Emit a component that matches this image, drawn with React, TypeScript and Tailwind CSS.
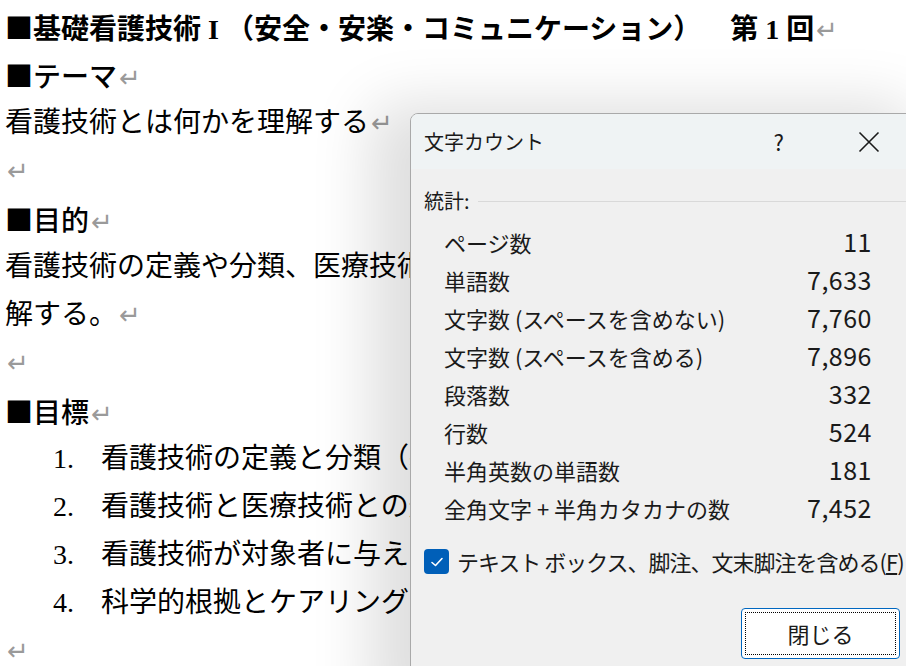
import React from "react";

const docFont = {
  fontFamily: '"Liberation Serif", "Noto Sans CJK JP", serif',
};

const uiFont = {
  fontFamily: '"Noto Sans CJK JP", "Noto Sans", sans-serif',
};

// Gray paragraph mark shown by Word
function Mark() {
  return (
    <span className="ml-[2px] text-[26px] font-normal leading-none text-[#9a9a9a]">↵</span>
  );
}

// Black square bullet, drawn with the CJK font so it is full width
function Square() {
  return (
    <span style={{ fontFamily: '"Noto Sans CJK JP", sans-serif' }}>■</span>
  );
}

const goals = [
  "看護技術の定義と分類（基本技術と応用技術）を説明できる",
  "看護技術と医療技術との違いと関係性を説明できる",
  "看護技術が対象者に与える影響について説明できる",
  "科学的根拠とケアリングの視点から看護技術を考える",
];

const stats = [
  { label: "ページ数", value: "11" },
  { label: "単語数", value: "7,633" },
  { label: "文字数 (スペースを含めない)", value: "7,760" },
  { label: "文字数 (スペースを含める)", value: "7,896" },
  { label: "段落数", value: "332" },
  { label: "行数", value: "524" },
  { label: "半角英数の単語数", value: "181" },
  { label: "全角文字 + 半角カタカナの数", value: "7,452" },
];

function Line({
  children,
  className = "",
}: {
  children: React.ReactNode;
  className?: string;
}) {
  return <div className={"h-[48px] " + className}>{children}</div>;
}

function Document() {
  return (
    <div
      className="flex flex-col pl-[5px] pt-[3px] text-[28px] leading-[48px] text-black whitespace-nowrap"
      style={docFont}
    >
      <Line className="font-bold">
        <Square />
        基礎看護技術 I （安全・安楽・コミュニケーション）
        <span className="pl-[29px]">第 1 回</span>
        <Mark />
      </Line>
      <Line className="font-medium">
        <Square />
        テーマ
        <Mark />
      </Line>
      <Line>
        看護技術とは何かを理解する
        <Mark />
      </Line>
      <Line>
        <Mark />
      </Line>
      <Line className="font-medium">
        <Square />
        目的
        <Mark />
      </Line>
      <Line>看護技術の定義や分類、医療技術との関係性について理</Line>
      <Line>
        解する。
        <Mark />
      </Line>
      <Line>
        <Mark />
      </Line>
      <Line className="font-medium">
        <Square />
        目標
        <Mark />
      </Line>
      {goals.map((goal, i) => (
        <Line key={goal} className="flex">
          <span className="w-[96px] pl-[48px]">{i + 1}.</span>
          <span>{goal}</span>
        </Line>
      ))}
      <Line>
        <Mark />
      </Line>
    </div>
  );
}

function WordCountDialog() {
  return (
    <div
      className="absolute left-[410px] top-[113px] flex h-[580px] w-[504px] flex-col overflow-hidden rounded-t-[8px] border border-[#a9a9a9] bg-[#f0f0f0] text-[#1a1a1a] shadow-[-20px_10px_60px_20px_rgba(0,0,0,0.13)]"
      style={uiFont}
    >
      {/* title bar */}
      <div className="flex h-[55px] shrink-0 items-center bg-[#eff3f4] pl-[13px]">
        <span className="text-[20px]">文字カウント</span>
        <span className="ml-auto mr-[74px] text-[22px]">?</span>
        <svg
          className="mr-[33px] h-[22px] w-[22px]"
          viewBox="0 0 22 22"
          fill="none"
          stroke="#1a1a1a"
          strokeWidth="1.6"
        >
          <path d="M1.5 1.5 20.5 20.5M20.5 1.5 1.5 20.5" />
        </svg>
      </div>

      <div className="flex flex-1 flex-col pl-[13px] pr-[41px]">
        <div className="mt-[18px] flex items-center">
          <span className="text-[20px] leading-[28px]">統計:</span>
          <div className="ml-[8px] -mr-[41px] h-px flex-1 bg-[#d9d9d9]" />
        </div>

        <div className="mt-[8px] flex flex-col pl-[20px]">
          {stats.map((s) => (
            <div
              key={s.label}
              className="flex h-[38px] items-center justify-between text-[22px]"
            >
              <span>{s.label}</span>
              <span className="text-[25px] tracking-[0.5px]">{s.value}</span>
            </div>
          ))}
        </div>

        <div className="mt-[18px] -mr-[41px] flex items-center gap-[8px] whitespace-nowrap">
          <div className="flex h-[25px] w-[25px] shrink-0 items-center justify-center rounded-[4px] bg-[#005fb8]">
            <svg
              className="h-[14px] w-[14px]"
              viewBox="0 0 14 14"
              fill="none"
              stroke="white"
              strokeWidth="1.6"
              strokeLinecap="round"
              strokeLinejoin="round"
            >
              <path d="M2 7.5 5.5 10.5 12 3.5" />
            </svg>
          </div>
          <span className="text-[22px] leading-[33px] tracking-[-1px]">
            テキスト ボックス、脚注、文末脚注を含める(<span className="underline">F</span>)
          </span>
        </div>

        <div className="mt-[30px] flex justify-end -mr-[28px]">
          <div className="flex h-[51px] w-[159px] items-center justify-center rounded-[4px] border border-[#0067c0] bg-white p-[3px]">
            <div className="flex h-full w-full items-center justify-center border border-dotted border-black text-[22px]">
              閉じる
            </div>
          </div>
        </div>
      </div>
    </div>
  );
}

export default function App() {
  return (
    <div className="relative h-[666px] w-[906px] overflow-hidden bg-white">
      <Document />
      <WordCountDialog />
    </div>
  );
}
